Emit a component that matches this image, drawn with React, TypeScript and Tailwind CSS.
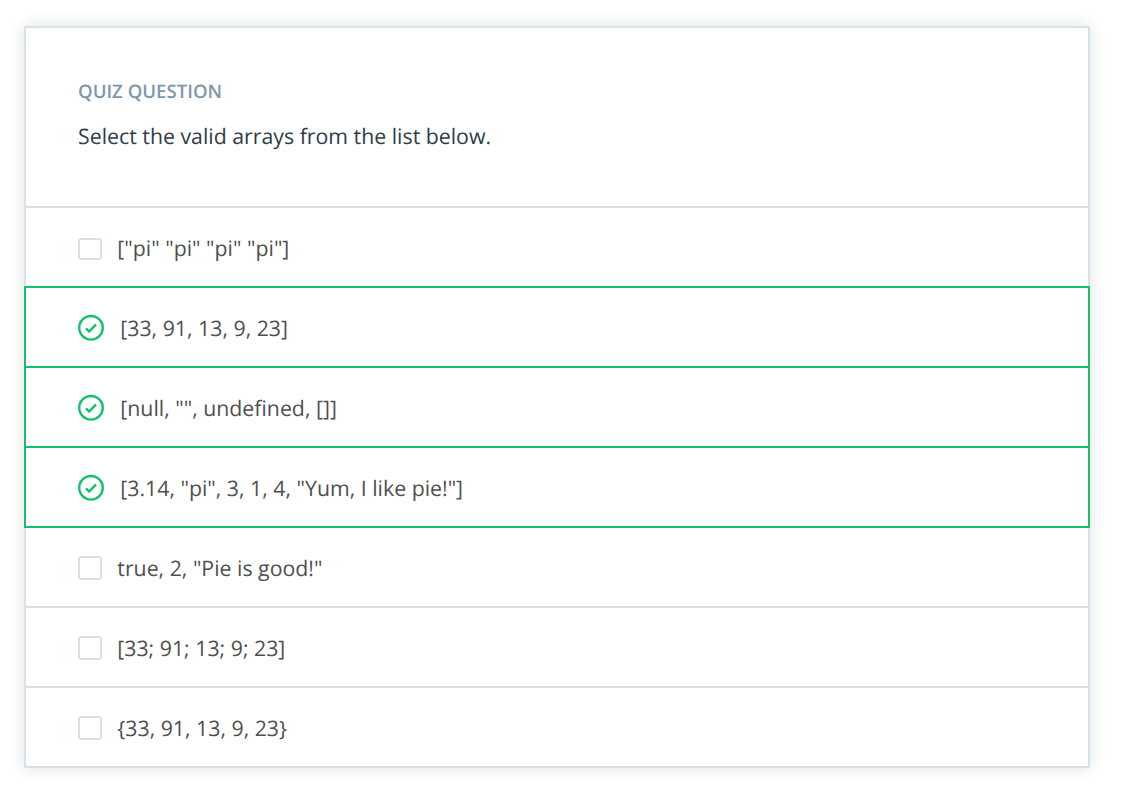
type Answer = { text: string; correct: boolean };

const answers: Answer[] = [
  { text: '["pi" "pi" "pi" "pi"]', correct: false },
  { text: "[33, 91, 13, 9, 23]", correct: true },
  { text: '[null, "", undefined, []]', correct: true },
  { text: '[3.14, "pi", 3, 1, 4, "Yum, I like pie!"]', correct: true },
  { text: 'true, 2, "Pie is good!"', correct: false },
  { text: "[33; 91; 13; 9; 23]", correct: false },
  { text: "{33, 91, 13, 9, 23}", correct: false },
];

function CheckCircle() {
  return (
    <svg className="mr-4 mt-0.5 h-7 w-[26px] shrink-0" viewBox="0 0 26 28" fill="none" stroke="#15c26b" strokeWidth="2.4">
      <circle cx="13" cy="13.8" r="11.8" />
      <path d="M7.9 14.4l3.3 3.2 6.8-7.2" strokeWidth="2.4" />
    </svg>
  );
}

function Row({ answer, first }: { answer: Answer; first: boolean }) {
  return (
    <li
      className={
        answer.correct
          ? "relative z-10 -mx-0.5 -mt-0.5 flex h-[82px] items-center border-2 border-[#15c26b] pl-[52px]"
          : "-mt-0.5 flex h-[82px] items-center border-y-2 border-[#d8e2ea] pl-[52px]"
      }
    >
      {answer.correct ? (
        <CheckCircle />
      ) : (
        <span
          className={
            first
              ? "mr-[15px] mt-1 h-[22px] w-6 shrink-0 rounded-[3px] border-2 border-[#d8e2ea]"
              : "mr-[15px] mt-0.5 size-6 shrink-0 rounded-[3px] border-2 border-[#d8e2ea]"
          }
        />
      )}
      <span className="pl-[0.3px] pt-1 text-[21.3px] leading-8 text-[#4f4f4f]">{answer.text}</span>
    </li>
  );
}

export default function App() {
  return (
    <main className="h-[788px] bg-white pl-6 pt-[26px] font-['Open_Sans',sans-serif] [text-rendering:geometricPrecision]">
      <section className="h-[742px] w-[1066px] border-2 border-[#d8e2ea] shadow-[0_0_15px_rgba(46,61,73,0.15)]">
        <header className="flex h-[180px] flex-col pl-[52px] pt-[50px]">
          <h1 className="text-[18.6px] font-semibold uppercase leading-7 text-[#7d97ad]">Quiz Question</h1>
          <p className="mt-[15px] text-[21.3px] leading-8 text-[#2e3d49]">Select the valid arrays from the list below.</p>
        </header>
        <ul>
          {answers.map((answer, index) => (
            <Row key={answer.text} answer={answer} first={index === 0} />
          ))}
        </ul>
      </section>
    </main>
  );
}
